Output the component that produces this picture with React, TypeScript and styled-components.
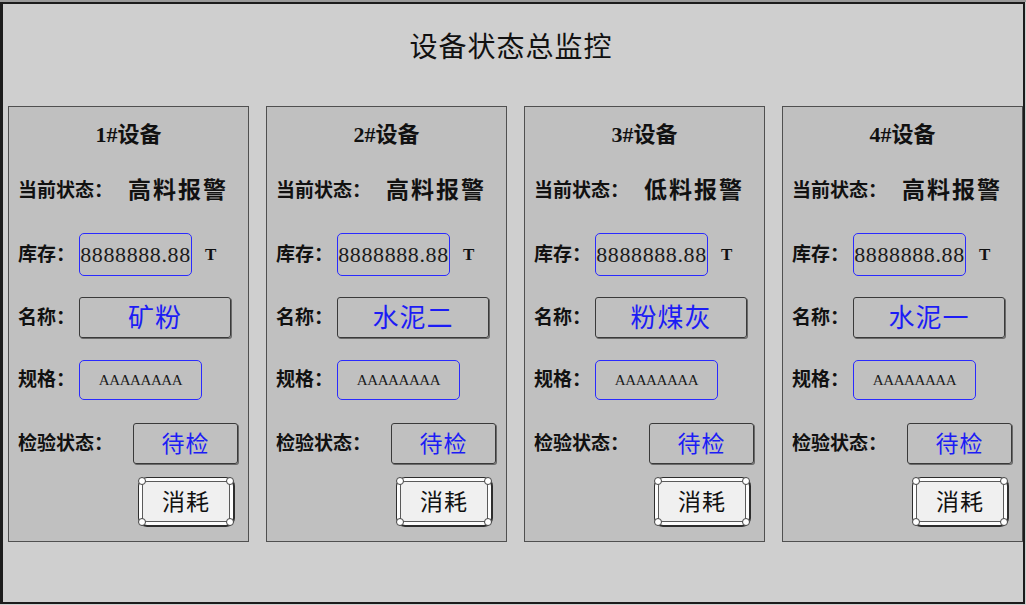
import React from "react";
import styled, { createGlobalStyle } from "styled-components";

const GlobalStyle = createGlobalStyle`
  html, body {
    margin: 0;
    padding: 0;
    background: #cfcfcf;
  }
  body {
    font-family: "Liberation Serif", "Noto Sans CJK SC", serif;
    color: #111;
  }
`;

type Device = {
  no: number;
  status: string;
  stock: string;
  name: string;
  spec: string;
  check: string;
};

const devices: Device[] = [
  { no: 1, status: "高料报警", stock: "8888888.88", name: "矿粉", spec: "AAAAAAAA", check: "待检" },
  { no: 2, status: "高料报警", stock: "8888888.88", name: "水泥二", spec: "AAAAAAAA", check: "待检" },
  { no: 3, status: "低料报警", stock: "8888888.88", name: "粉煤灰", spec: "AAAAAAAA", check: "待检" },
  { no: 4, status: "高料报警", stock: "8888888.88", name: "水泥一", spec: "AAAAAAAA", check: "待检" }
];

const App: React.FC = () => {
  return (
    <Screen>
      <GlobalStyle />
      <TopStrip />
      <Frame>
        <TitleBar>设备状态总监控</TitleBar>
        <PanelRow>
          {devices.map(d => (
            <Panel key={d.no}>
              <PanelTitle>{d.no}#设备</PanelTitle>
              <Row $top={26}>
                <Label $width={110}>当前状态：</Label>
                <StatusValue>{d.status}</StatusValue>
              </Row>
              <Row $top={27}>
                <Label $width={61}>库存：</Label>
                <BlueBox $width={113} $height={43}>
                  <StockText>{d.stock}</StockText>
                </BlueBox>
                <Unit>T</Unit>
              </Row>
              <Row $top={21}>
                <Label $width={61}>名称：</Label>
                <DarkBox $width={152} $height={41}>
                  <BlueText $size={26}>{d.name}</BlueText>
                </DarkBox>
              </Row>
              <Row $top={22}>
                <Label $width={61}>规格：</Label>
                <BlueBox $width={123} $height={40}>
                  <SpecText>{d.spec}</SpecText>
                </BlueBox>
              </Row>
              <Row $top={23}>
                <Label $width={115}>检验状态：</Label>
                <DarkBox $width={105} $height={41}>
                  <BlueText $size={23}>{d.check}</BlueText>
                </DarkBox>
              </Row>
              <ButtonRow>
                <ConsumeButton>
                  消耗
                  <Corner $v="top" $h="left" />
                  <Corner $v="top" $h="right" />
                  <Corner $v="bottom" $h="left" />
                  <Corner $v="bottom" $h="right" />
                </ConsumeButton>
              </ButtonRow>
            </Panel>
          ))}
        </PanelRow>
      </Frame>
    </Screen>
  );
};

export default App;

const Screen = styled.div`
  width: 1026px;
  height: 605px;
  background: #cfcfcf;
  overflow: hidden;
`;

const TopStrip = styled.div`
  height: 2px;
  background: #9a9a9a;
`;

const Frame = styled.div`
  box-sizing: border-box;
  width: 1025px;
  height: 602px;
  border: 2px solid #1c1c1c;
  border-left-width: 3px;
  display: flex;
  flex-direction: column;
`;

const TitleBar = styled.div`
  box-sizing: border-box;
  height: 102px;
  padding-top: 26px;
  padding-right: 4px;
  text-align: center;
  font-family: "Noto Sans CJK SC", sans-serif;
  font-size: 28px;
  line-height: 30px;
  letter-spacing: 1px;
  color: #111;
`;

const PanelRow = styled.div`
  display: flex;
  gap: 17px;
  padding-left: 5px;
`;

const Panel = styled.div`
  box-sizing: border-box;
  width: 241px;
  height: 436px;
  background: #c0c0c0;
  border: 1px solid #505050;
  padding: 0 9px;
  display: flex;
  flex-direction: column;
`;

const PanelTitle = styled.div`
  margin-top: 13px;
  height: 30px;
  line-height: 30px;
  text-align: center;
  font-size: 22px;
  font-weight: bold;
`;

const Row = styled.div<{ $top: number }>`
  display: flex;
  align-items: center;
  margin-top: ${p => p.$top}px;
  min-height: 30px;
  line-height: 30px;
`;

const Label = styled.div<{ $width: number }>`
  width: ${p => p.$width}px;
  flex-shrink: 0;
  font-size: 19px;
  font-weight: bold;
  white-space: nowrap;
`;

const StatusValue = styled.div`
  font-size: 23px;
  font-weight: bold;
  letter-spacing: 2px;
  white-space: nowrap;
`;

const BlueBox = styled.div<{ $width: number; $height: number }>`
  box-sizing: border-box;
  width: ${p => p.$width}px;
  height: ${p => p.$height}px;
  border: 1px solid #2a2aff;
  border-radius: 5px;
  display: flex;
  align-items: center;
  justify-content: center;
  overflow: hidden;
`;

const DarkBox = styled.div<{ $width: number; $height: number }>`
  box-sizing: border-box;
  width: ${p => p.$width}px;
  height: ${p => p.$height}px;
  border: 1px solid #3a3a3a;
  border-radius: 3px;
  box-shadow: 1px 1px 0 #6a6a6a;
  display: flex;
  align-items: center;
  justify-content: center;
`;

const StockText = styled.span`
  font-family: "Liberation Serif", serif;
  font-size: 22px;
  letter-spacing: 0.6px;
  color: #1a1a1a;
  white-space: nowrap;
`;

const SpecText = styled.span`
  font-family: "Liberation Serif", serif;
  font-size: 15px;
  letter-spacing: -0.4px;
  color: #1a1a1a;
`;

const Unit = styled.span`
  margin-left: 13px;
  font-size: 17px;
  font-weight: bold;
`;

const BlueText = styled.span<{ $size: number }>`
  font-family: "Noto Sans CJK SC", sans-serif;
  font-size: ${p => p.$size}px;
  line-height: 1;
  margin-bottom: 3px;
  color: #1c1cf5;
  letter-spacing: 1px;
  white-space: nowrap;
`;

const ButtonRow = styled.div`
  display: flex;
  justify-content: flex-end;
  padding-right: 4px;
  margin-top: 13px;
`;

const ConsumeButton = styled.div`
  position: relative;
  box-sizing: border-box;
  width: 97px;
  height: 50px;
  border: 1px solid #2e2e2e;
  border-right-width: 2px;
  border-bottom-width: 2px;
  border-radius: 9px;
  background: #f0f0f0;
  box-shadow: inset 0 0 0 3px #fdfdfd, inset 0 0 0 4px #5a5a5a;
  display: flex;
  align-items: center;
  justify-content: center;
  padding-bottom: 3px;
  font-family: "Noto Sans CJK SC", sans-serif;
  font-size: 23px;
  line-height: 1;
  color: #111;
  letter-spacing: 1px;
`;

const Corner = styled.span<{ $v: "top" | "bottom"; $h: "left" | "right" }>`
  position: absolute;
  ${p => p.$v}: -1px;
  ${p => p.$h}: -1px;
  width: 8px;
  height: 8px;
  box-sizing: border-box;
  border-radius: 50%;
  background: #fff;
  border: 1px solid #444;
`;
